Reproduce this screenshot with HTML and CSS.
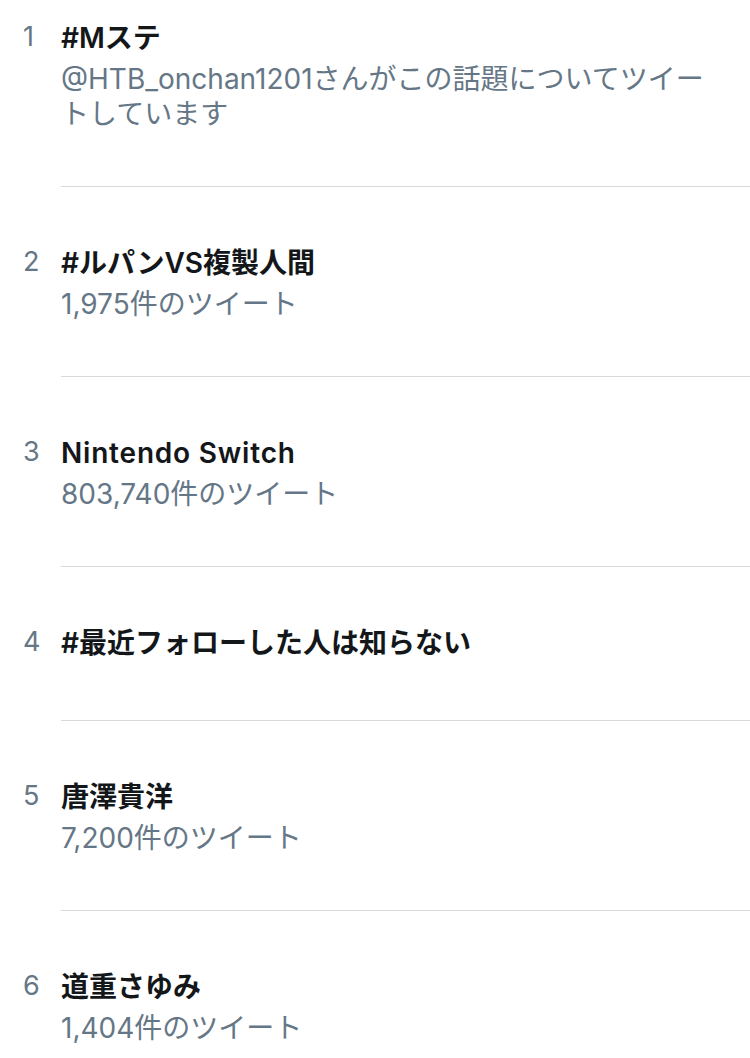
FILE: index.html
```html
<!DOCTYPE html>
<html lang="ja">
<head>
    <meta charset="UTF-8">
    <meta name="viewport" content="width=device-width, initial-scale=1.0">
    <title>トレンド</title>
    <link rel="stylesheet" href="styles.css">
</head>
<body>

    <ol class="trends">
        <li class="trend">
            <span class="rank">1</span>
            <div class="body">
                <div class="name">#Mステ</div>
                <div class="meta">@HTB_onchan1201さんがこの話題についてツイートしています</div>
            </div>
        </li>
        <li class="trend">
            <span class="rank">2</span>
            <div class="body">
                <div class="name">#ルパンVS複製人間</div>
                <div class="meta">1,975件のツイート</div>
            </div>
        </li>
        <li class="trend">
            <span class="rank">3</span>
            <div class="body">
                <div class="name latin">Nintendo Switch</div>
                <div class="meta">803,740件のツイート</div>
            </div>
        </li>
        <li class="trend trend-plain">
            <span class="rank">4</span>
            <div class="body">
                <div class="name">#最近フォローした人は知らない</div>
            </div>
        </li>
        <li class="trend">
            <span class="rank">5</span>
            <div class="body">
                <div class="name">唐澤貴洋</div>
                <div class="meta">7,200件のツイート</div>
            </div>
        </li>
        <li class="trend">
            <span class="rank">6</span>
            <div class="body">
                <div class="name">道重さゆみ</div>
                <div class="meta">1,404件のツイート</div>
            </div>
        </li>
    </ol>

</body>
</html>
```

FILE: styles.css
```css
body {
    margin: 0;
    background-color: #ffffff;
    font-family: 'Inter', 'Noto Sans CJK JP', sans-serif;
    overflow: hidden;
}

.trends {
    list-style: none;
    margin: 0;
    padding: 0;
}

.trend {
    display: grid;
    grid-template-columns: 61px 1fr;
}

.rank {
    padding-top: 57px;
    padding-left: 23px;
    font-size: 27px;
    line-height: 36px;
    color: #657786;
}

.body {
    padding: 58px 30px 54px 0;
    border-bottom: 1px solid #d6dadd;
}

.trend:first-child .rank,
.trend:first-child .body {
    padding-top: 19px;
}

.trend:first-child .body {
    padding-top: 20px;
}

.trend-plain .body {
    padding-bottom: 59px;
}

.name {
    font-size: 28px;
    font-weight: 600;
    line-height: 36px;
    color: #14171a;
}

/* wider latin, like the system font */
.name.latin {
    letter-spacing: 0.8px;
}

.meta {
    margin-top: 6px;
    font-size: 28px;
    line-height: 35px;
    color: #657786;
}
```
